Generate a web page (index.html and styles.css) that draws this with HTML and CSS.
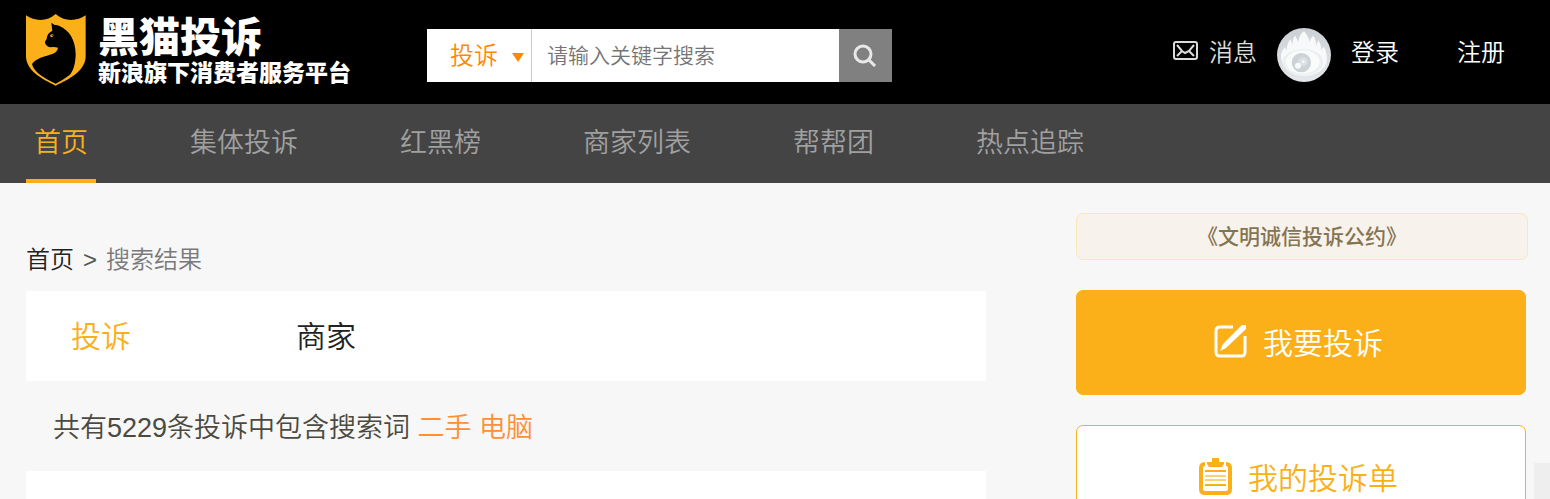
FILE: index.html
```
<!DOCTYPE html>
<html lang="zh-CN">
<head>
	<meta charset="utf-8">
	<title>黑猫投诉</title>
	<link rel="stylesheet" href="styles.css">
</head>
<body>
	<header class="header">
		<a class="logo" href="#">
			<svg class="logo-shield" viewBox="18 18 180 216" aria-hidden="true">
				<path fill="#fbb01a" d="M18 22C46 42 84 40 107 18C130 40 169 42 197 22V144C197 188 150 212 107 233C65 212 18 188 18 144Z"/>
				<path fill="#000" d="M94 44L104 51Q110 50 117 53C149 66 167 98 167 138C167 165 160 190 148 202Q130 216 107 227C76 212 42 194 36 168C48 150 78 145 97 138Q112 132 114 119Q103 115 90 118Q76 114 75 103Q75 99 80 93C82 79 87 73 97 69Z"/>
				<path fill="#fbb01a" d="M90 82Q96 76 101 80Q100 88 93 88Z"/>
				<circle cx="97" cy="83" r="2"/>
			</svg>
			<span class="logo-text">
				<strong class="logo-name">黑猫投诉</strong>
				<span class="logo-desc">新浪旗下消费者服务平台</span>
			</span>
		</a>

		<form class="search">
			<div class="search-type">
				<select aria-label="搜索类型">
					<option>投诉</option>
					<option>商家</option>
				</select>
			</div>
			<input class="search-input" type="text" placeholder="请输入关键字搜索" aria-label="搜索">
			<button class="search-btn" type="submit" aria-label="搜索">
				<svg width="24" height="24" viewBox="0 0 24 24" fill="none" stroke="#e8e8e8">
					<circle cx="10" cy="10" r="8" stroke-width="3"/>
					<path d="M16 16L22 22" stroke-width="3"/>
				</svg>
			</button>
		</form>

		<div class="user">
			<a class="message" href="#">
				<svg width="25" height="19" viewBox="0 0 25 19" fill="none" stroke="#dcdcdc" stroke-width="2">
					<rect x="1" y="1" width="23" height="17" rx="2"/>
					<path d="M4 4L9 10L12 12L16 10L21 4M4 15L9 10M21 15L16 10"/>
				</svg>
				<span>消息</span>
			</a>
			<svg class="avatar" viewBox="0 0 162 162" role="img" aria-label="头像">
				<defs>
					<clipPath id="round"><circle cx="81" cy="81" r="81"/></clipPath>
					<linearGradient id="back" x2="0" y2="1">
						<stop offset="0" stop-color="#cbd0d5"/>
						<stop offset="1" stop-color="#e4e8ea"/>
					</linearGradient>
				</defs>
				<g clip-path="url(#round)">
					<rect width="162" height="162" fill="url(#back)"/>
					<path fill="#f8f9fa" d="M14 98C9 82 14 68 24 58L28 68Q32 40 41 34L46 52Q47 28 55 23L64 42Q67 18 81 10Q93 22 98 42Q102 27 109 23Q117 33 117 53L124 37Q133 50 133 66L140 56Q151 72 149 98C147 125 115 143 81 143C46 143 19 124 14 98Z"/>
					<ellipse cx="78" cy="102" rx="61" ry="39" fill="#eceff0"/>
					<ellipse cx="77" cy="102" rx="51" ry="35" fill="#fafbfb"/>
					<circle cx="73" cy="104" r="29" fill="#ccd2d5"/>
					<circle cx="78" cy="101" r="14" fill="#dbe0e3"/>
					<circle cx="63" cy="113" r="9" fill="#f8f9fa"/>
					<circle cx="79" cy="101" r="4" fill="#f8f9fa"/>
				</g>
			</svg>
			<a class="login" href="#">登录</a>
			<a class="register" href="#">注册</a>
		</div>
	</header>

	<nav class="nav">
		<ul>
			<li><a class="active" href="#">首页</a></li>
			<li><a href="#">集体投诉</a></li>
			<li><a href="#">红黑榜</a></li>
			<li><a href="#">商家列表</a></li>
			<li><a href="#">帮帮团</a></li>
			<li><a href="#">热点追踪</a></li>
		</ul>
	</nav>

	<div class="container">
		<main class="content">
			<div class="crumbs">
				<a href="#">首页</a>
				<span class="arrow">&gt;</span>
				<span class="current">搜索结果</span>
			</div>
			<div class="tabs">
				<a class="active" href="#">投诉</a>
				<a href="#">商家</a>
			</div>
			<p class="summary">共有5229条投诉中包含搜索词 <span>二手 电脑</span></p>
			<div class="results"></div>
		</main>

		<!-- right column -->
		<aside class="side">
			<a class="pledge" href="#">《文明诚信投诉公约》</a>
			<a class="side-btn" href="#">
				<svg width="33" height="33" viewBox="0 0 33 33" fill="none" stroke="#fff" stroke-width="3">
					<path d="M19 2H6Q2 2 2 6V27Q2 31 6 31H27Q31 31 31 27V11"/>
					<path fill="#fff" stroke="none" d="M28 0H32V4L12 23L6 26L9 19Z"/>
				</svg>
				<span>我要投诉</span>
			</a>
			<a class="side-btn side-btn-line" href="#">
				<svg width="33" height="37" viewBox="0 0 33 37" fill="none" stroke="#fbb01a">
					<path stroke-width="4" d="M6 6Q2 6 2 10V31Q2 35 6 35H27Q31 35 31 31V10Q31 6 27 6"/>
					<path fill="#fbb01a" stroke="none" d="M13 0H20V4H25V6L23 9H10L8 6V4H13Z"/>
					<path stroke-width="2" d="M6 13H27M6 27H27"/>
					<path stroke-width="2" opacity=".6" d="M6 18H27M6 22H27"/>
				</svg>
				<span>我的投诉单</span>
			</a>
		</aside>
	</div>

	<div class="float-bar"></div>
</body>
</html>
```
FILE: styles.css
```
* {
  box-sizing: border-box;
}

body {
  margin: 0;
  height: 100vh;
  overflow: hidden;
  background-color: #f7f7f7;
  color: #222;
  font-family: "Liberation Sans", "Noto Sans CJK SC", sans-serif;
  font-size: 24px;
  font-weight: 350;
}

a {
  color: inherit;
  text-decoration: none;
}

/* header */
.header {
  display: flex;
  align-items: center;
  height: 104px;
  padding: 0 45px 0 26px;
  background-color: #000;
  color: #fff;
}

.logo {
  display: flex;
  gap: 12px;
  width: 401px;
  padding-bottom: 4px;
}

.logo-shield {
  width: 60px;
  height: 72px;
}

.logo-text {
  display: flex;
  flex-direction: column;
  white-space: nowrap;
}

.logo-name {
  font-size: 41px;
  font-weight: 900;
  line-height: 48px;
}

.logo-desc {
  font-size: 23px;
  font-weight: 900;
  line-height: 22px;
}

.search {
  display: flex;
  width: 465px;
  height: 53px;
  margin-top: 7px;
  background-color: #fff;
}

.search-type {
  position: relative;
  width: 105px;
  border-right: 1px solid #ccc;
}

.search-type::after {
  content: "";
  position: absolute;
  top: 24px;
  right: 7px;
  border: 6px solid transparent;
  border-top: 9px solid #ff8800;
  border-bottom: 0;
  pointer-events: none;
}

.search-type select {
  width: 100%;
  height: 100%;
  padding: 0 0 0 23px;
  border: 0;
  background: none;
  color: #ff8800;
  font: inherit;
  appearance: none;
}

.search-input {
  flex: 1;
  min-width: 0;
  padding: 0 15px;
  border: 0;
  font: inherit;
  font-size: 21px;
}

.search-btn {
  display: flex;
  align-items: center;
  justify-content: center;
  width: 53px;
  padding: 0 2px 0 0;
  border: 0;
  background-color: #808080;
}

.user {
  display: flex;
  align-items: center;
  margin-left: auto;
  padding-bottom: 4px;
}

.message {
  display: flex;
  align-items: center;
  gap: 11px;
  color: #dcdcdc;
}

.avatar {
  width: 54px;
  height: 54px;
  margin: 10px 20px 0;
}

.register {
  margin-left: 58px;
}

/* nav */
.nav {
  background-color: #444;
  color: #a0a0a0;
  font-size: 27px;
}

.nav ul {
  display: flex;
  gap: 86px;
  margin: 0;
  padding: 0 26px;
  list-style: none;
}

.nav a {
  display: block;
  padding: 4px 8px 0;
  border-bottom: 4px solid transparent;
  line-height: 71px;
}

.nav .active {
  border-color: #fbb01a;
  color: #fbb01a;
}

/* page body */
.container {
  display: grid;
  grid-template-columns: 1fr 450px;
  gap: 90px;
  padding: 30px 24px 0 26px;
}

.crumbs {
  display: flex;
  gap: 9px;
  padding-top: 29px;
  line-height: 36px;
  margin-bottom: 13px;
}

.crumbs .arrow {
  color: #555;
}

.crumbs .current {
  color: #7a7a7a;
}

.tabs {
  display: flex;
  gap: 165px;
  padding: 2px 45px 0;
  background-color: #fff;
  font-size: 30px;
  line-height: 88px;
}

.tabs .active {
  color: #fbb01a;
}

.summary {
  margin: 0;
  padding: 4px 27px 0;
  color: #4c4a40;
  font-size: 27px;
  line-height: 86px;
}

.summary span {
  color: #ff8f35;
}

.results {
  min-height: 300px;
  background-color: #fff;
}

/* side */
.side {
  display: flex;
  flex-direction: column;
  gap: 30px;
}

.pledge {
  box-sizing: content-box;
  width: 100%;
  border: 1px solid #fde6b8;
  border-radius: 7px;
  background-color: #f7f2ec;
  color: #857450;
  font-size: 21px;
  font-weight: 500;
  line-height: 45px;
  text-align: center;
}

.side-btn {
  display: flex;
  align-items: center;
  justify-content: center;
  gap: 16px;
  height: 105px;
  padding: 0 5px 3px 0;
  border: 1px solid #fbb01a;
  border-radius: 7px;
  background-color: #fbb01a;
  color: #fff;
  font-size: 30px;
}

.side-btn-line {
  background-color: #fff;
  color: #fbb01a;
}

.float-bar {
  position: fixed;
  right: 0;
  bottom: 0;
  width: 16px;
  height: 36px;
  background-color: #eee;
}
```
